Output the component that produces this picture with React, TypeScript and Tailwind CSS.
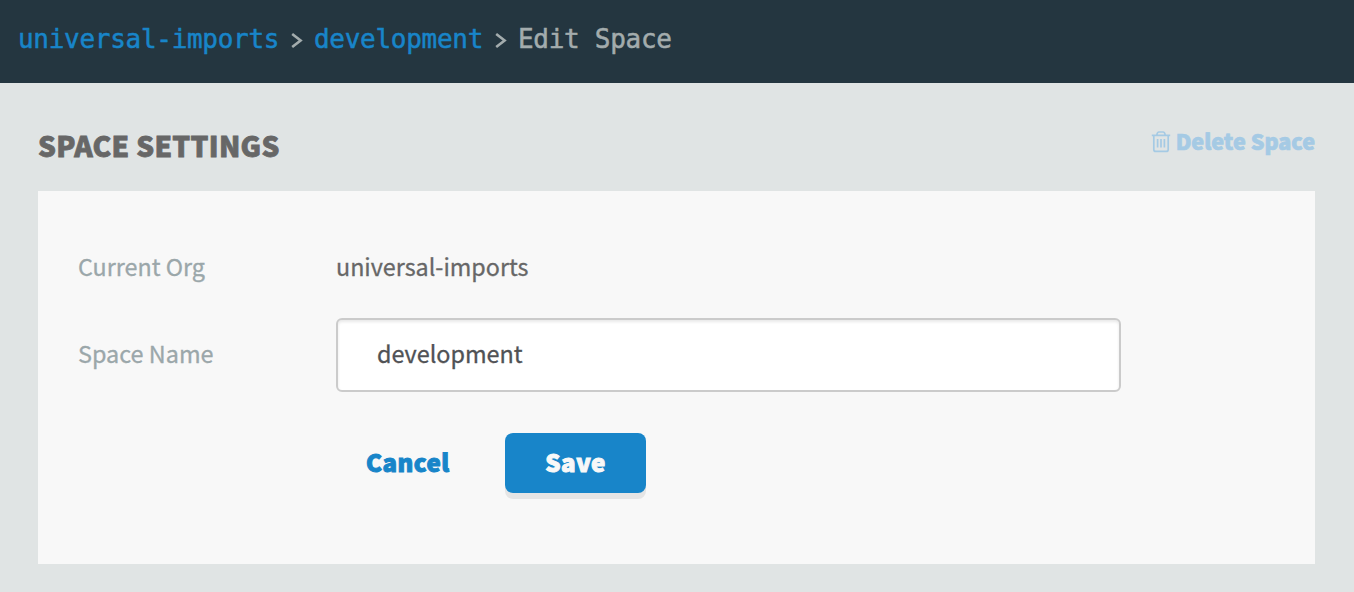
function Chevron() {
  return (
    <svg className="mt-[3px] h-[15px] w-3 shrink-0" viewBox="0 0 12 15" fill="none" stroke="#a3acad" strokeWidth="2.6">
      <path d="M1.2 1 L9.6 7.5 L1.2 14" />
    </svg>
  );
}

function TrashIcon() {
  return (
    <svg className="h-[22px] w-5 shrink-0" viewBox="0 0 20 22" fill="none" stroke="#a5cae4" strokeWidth="1.7">
      <path d="M0.8 4.4 H19.2 M5.6 4.4 L6.4 2 Q6.8 1 7.8 1 H12.2 Q13.2 1 13.6 2 L14.4 4.4" />
      <path d="M2.8 4.8 V18.4 Q2.8 20.4 4.8 20.4 H15.2 Q17.2 20.4 17.2 18.4 V4.8" />
      <path d="M6.6 8 V16.6 M10 8 V16.6 M13.4 8 V16.6" />
    </svg>
  );
}

export default function App() {
  return (
    <div className="h-[592px] w-full overflow-hidden bg-[#e0e4e4] font-['Noto_Sans_CJK_SC','Noto_Sans',sans-serif]">
      <header className="h-[83px] bg-[#243640] pl-[18px] pt-[19px]">
        <nav className="flex h-10 items-center whitespace-pre font-['DejaVu_Sans_Mono','Liberation_Mono',monospace] text-[26px] leading-10 tracking-[-0.29px] text-[#a3acad]">
          <a className="w-[273px] text-[#1885c9] [-webkit-text-stroke:0.5px_#1885c9]">universal-imports</a>
          <Chevron />
          <a className="ml-[11px] w-[181px] text-[#1885c9] [-webkit-text-stroke:0.5px_#1885c9]">development</a>
          <Chevron />
          <span className="ml-[11px] [-webkit-text-stroke:0.5px_#a3acad]">Edit Space</span>
        </nav>
      </header>
      <main className="px-[38px]">
        <div className="flex h-[108px] items-start justify-between pr-px">
          <h1 className="pt-[42px] text-[28px] font-black leading-10 tracking-[0.3px] text-[#676767] [-webkit-text-stroke:0.8px_#676767]">SPACE SETTINGS</h1>
          <button className="flex items-start gap-[5px] pt-[38px] text-[21.5px] font-black leading-10 text-[#a5cae4]">
            <span className="pt-[10px]"><TrashIcon /></span>
            <span className="[-webkit-text-stroke:0.7px_#a5cae4]">Delete Space</span>
          </button>
        </div>
        <form className="mr-px h-[373px] bg-[#f8f8f8] pl-10 pt-[55px] text-2xl leading-10">
          <div className="flex h-[72px] text-[23.3px] leading-10">
            <span className="w-[258px] text-[#9ba7aa] [-webkit-text-stroke:0.3px_#9ba7aa]">Current Org</span>
            <span className="text-[#676767] [-webkit-text-stroke:0.3px_#676767]">universal-imports</span>
          </div>
          <div className="flex h-[74px] items-center text-[23.4px] leading-10">
            <label className="w-[258px] pb-1 text-[#9ba7aa] [-webkit-text-stroke:0.3px_#9ba7aa]">Space Name</label>
            <div className="flex h-[74px] w-[785px] items-center rounded-md border-2 border-[#cbcbcb] bg-white pb-1 pl-[39px] text-[#505255] shadow-[inset_0_2px_3px_rgba(0,0,0,0.09)] [-webkit-text-stroke:0.3px_#505255]">
              development
            </div>
          </div>
          <div className="mt-[41px] flex pl-[288px] font-black tracking-[0.5px]">
            <button type="button" className="h-[60px] w-[139px] pb-[2px] text-left text-[#1885c9] [-webkit-text-stroke:1px_#1885c9]">Cancel</button>
            <button type="button" className="h-[60px] w-[141px] rounded-lg bg-[#1885c9] pb-[2px] text-[#f8f8f8] shadow-[0_6px_0_#e5e5e5] [-webkit-text-stroke:1px_#f8f8f8]">Save</button>
          </div>
        </form>
      </main>
    </div>
  );
}
